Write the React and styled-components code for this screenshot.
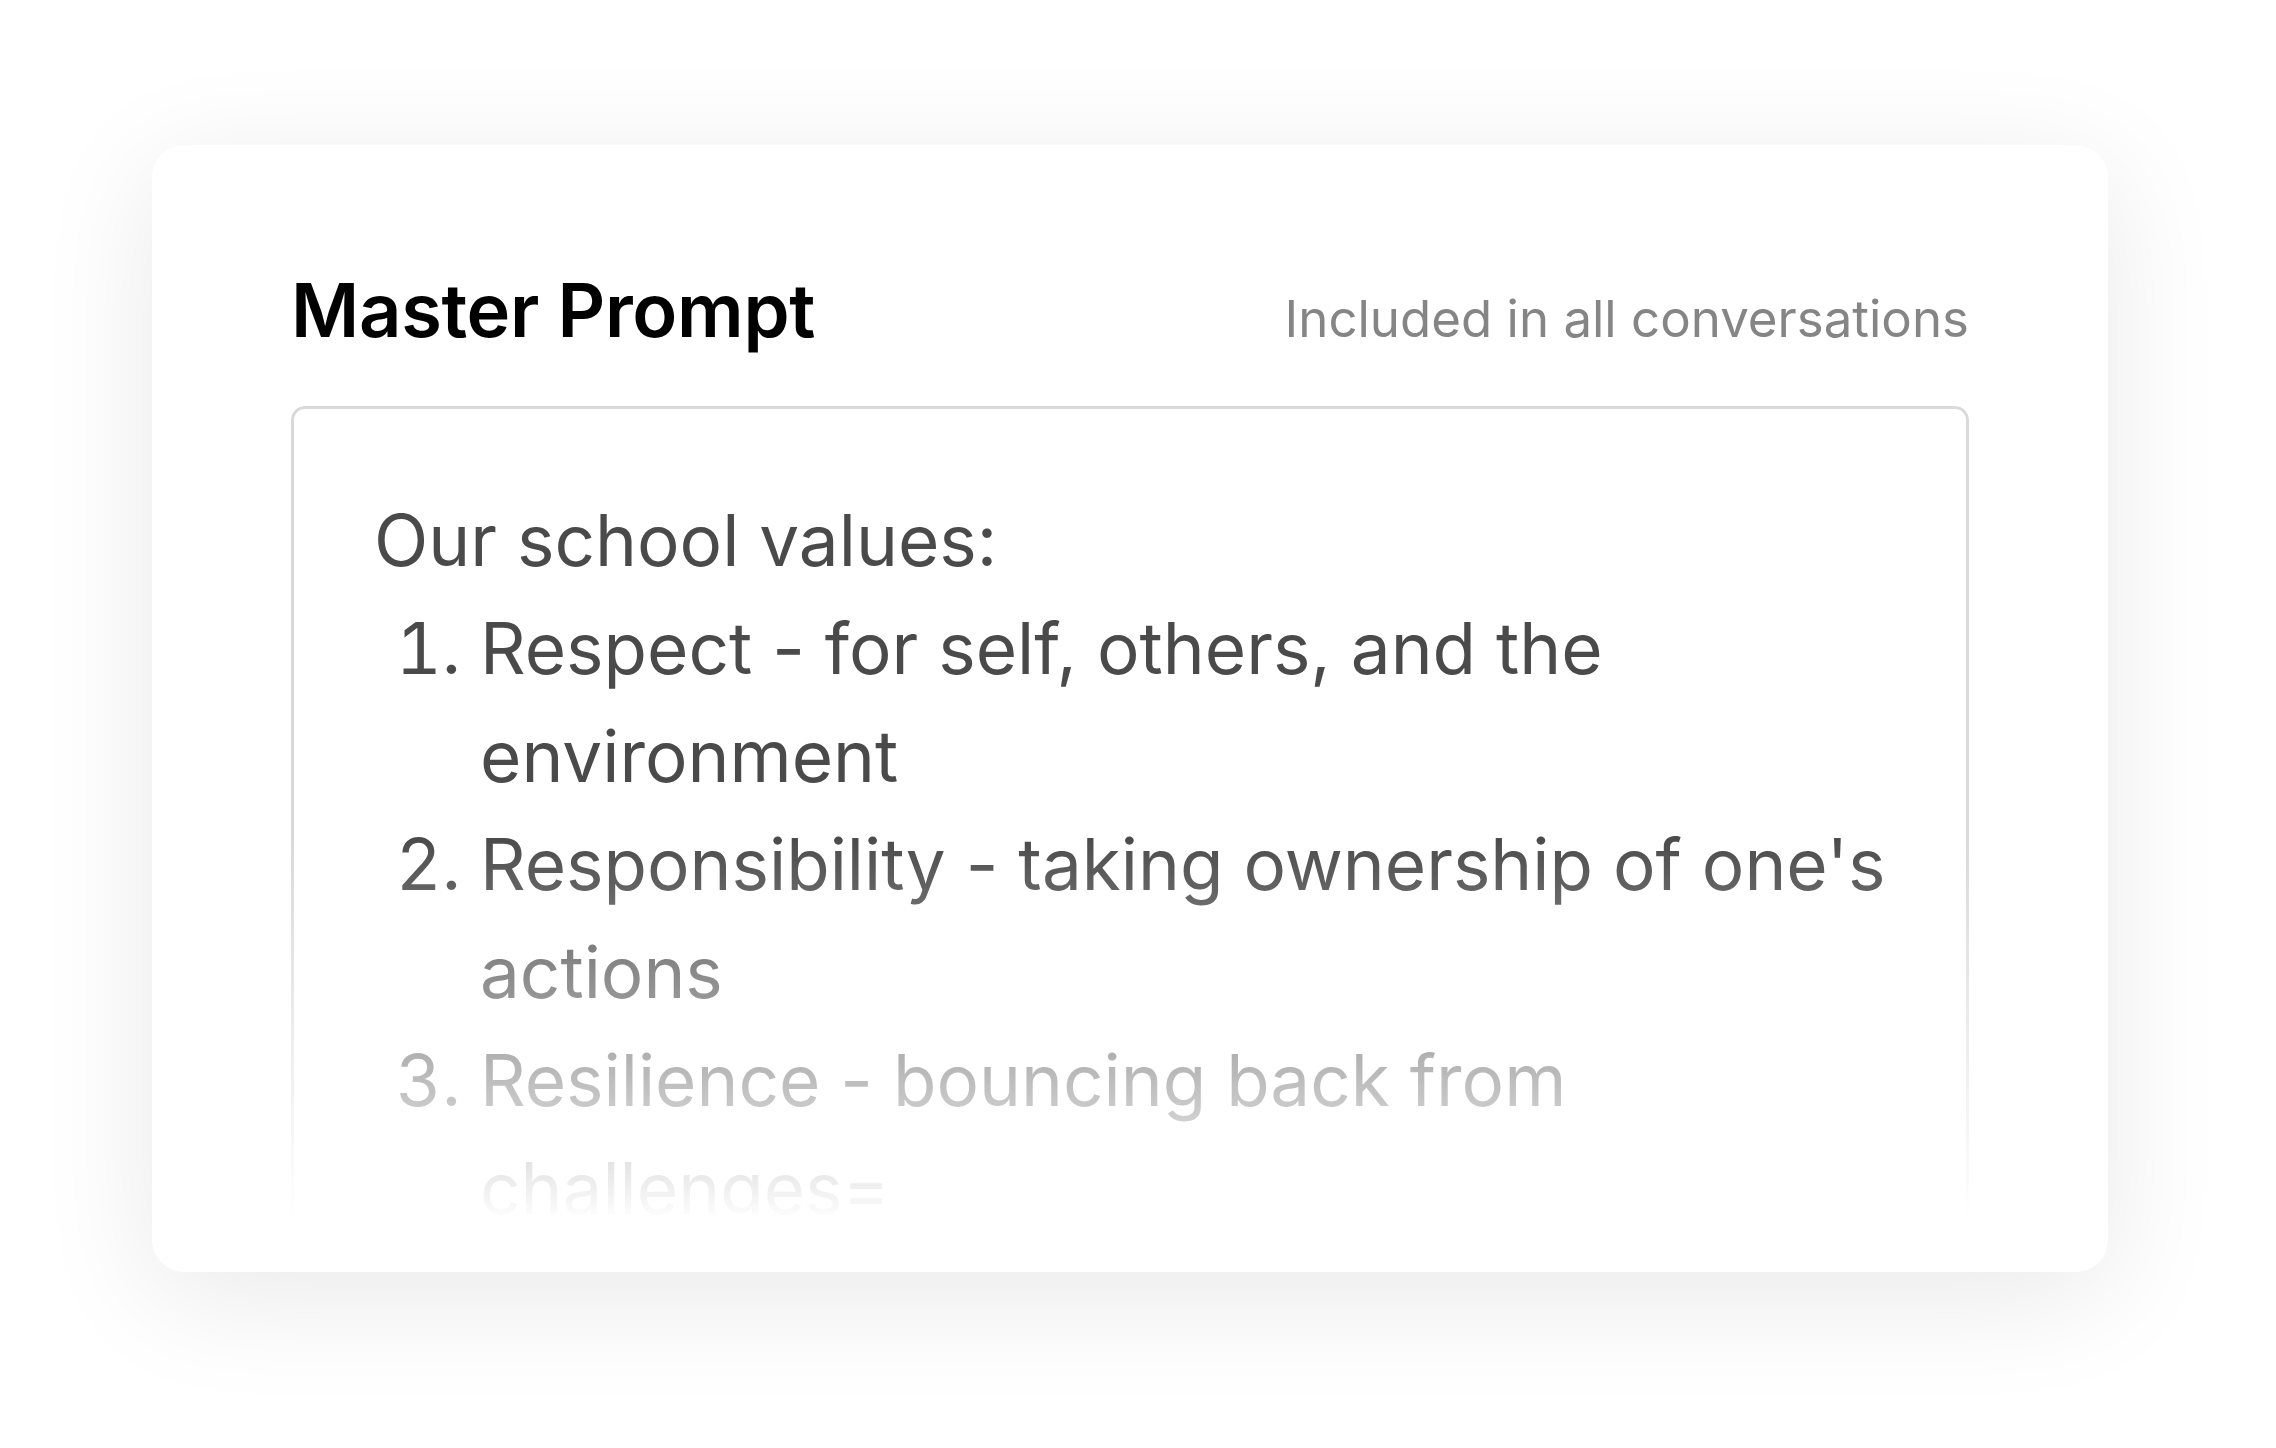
import React from 'react'
import styled, { createGlobalStyle } from 'styled-components'

const GlobalStyle = createGlobalStyle`
  html, body {
    margin: 0;
    padding: 0;
    background: #ffffff;
  }
  body {
    font-family: Inter, 'Noto Sans', 'Liberation Sans', sans-serif;
    -webkit-font-smoothing: antialiased;
  }
`;

const Page = styled.div`
  width: 2276px;
  height: 1448px;
  box-sizing: border-box;
  padding: 145px 168px 0 152px;
  background: #ffffff;
`;

const Card = styled.div`
  width: 1956px;
  height: 1127px;
  box-sizing: border-box;
  padding: 0 139px;
  background: #ffffff;
  border-radius: 32px;
  box-shadow: 0 24px 120px rgba(0, 0, 0, 0.09);
  display: flex;
  flex-direction: column;
  overflow: hidden;
`;

const Header = styled.div`
  display: flex;
  justify-content: space-between;
  align-items: baseline;
  padding-top: 121px;
  margin-bottom: 52px;
`;

const Title = styled.h2`
  margin: 0;
  font-size: 74px;
  line-height: 88px;
  font-weight: 600;
  color: #000000;
  letter-spacing: -0.3px;
`;

const Caption = styled.span`
  font-size: 51px;
  line-height: 60px;
  font-weight: 400;
  color: #858585;
`;

const PromptBox = styled.div`
  height: 810px;
  box-sizing: border-box;
  border: 3px solid #d9d9d9;
  border-bottom: none;
  border-radius: 14px 14px 0 0;
  padding: 77px 56px 0 80px;
  overflow: hidden;
  font-size: 71px;
  line-height: 108px;
  color: #4a4a4a;
  -webkit-mask-image: linear-gradient(to bottom, #000 0, #000 430px, transparent 815px);
  mask-image: linear-gradient(to bottom, #000 0, #000 430px, transparent 815px);
`;

const Lead = styled.p`
  margin: 0;
`;

const Values = styled.ol`
  margin: 0;
  padding-left: 106px;
`;

const Value = styled.li`
  padding-left: 0;
`;

const values = [
  'Respect - for self, others, and the environment',
  "Responsibility - taking ownership of one's actions",
  'Resilience - bouncing back from challenges=',
];

export default function App() {
  return (
    <>
      <GlobalStyle />
      <Page>
        <Card>
          <Header>
            <Title>Master Prompt</Title>
            <Caption>Included in all conversations</Caption>
          </Header>
          <PromptBox>
            <Lead>Our school values:</Lead>
            <Values>
              {values.map(v => (
                <Value key={v}>{v}</Value>
              ))}
            </Values>
          </PromptBox>
        </Card>
      </Page>
    </>
  );
}
